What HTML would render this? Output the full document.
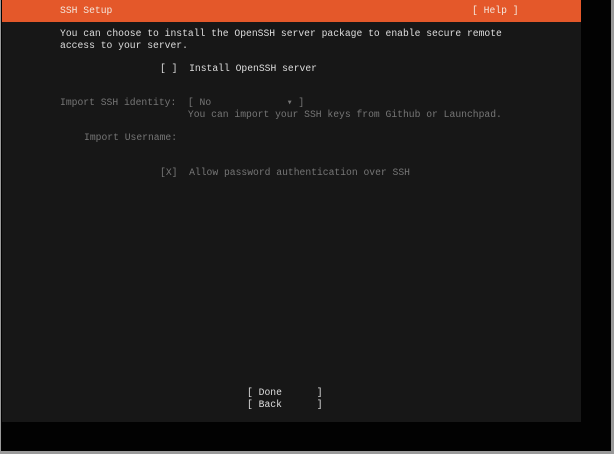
<!DOCTYPE html>
<html><head><style>
html,body{margin:0;padding:0;}
body{width:614px;height:454px;background:#9a9a9a;position:relative;overflow:hidden;font-family:"Liberation Mono",monospace;font-size:9.7px;}
#blk{position:absolute;left:1px;top:0;width:610px;height:451px;background:#020202;}
#scr{position:absolute;left:2px;top:0;width:579px;height:422px;background:#171717;}
#bar{position:absolute;left:2px;top:0;width:579px;height:22px;background:#e4582a;}
.t{position:absolute;white-space:pre;line-height:12px;color:#dedede;}
.d{color:#767676;}
.w{color:#f4e6dc;}
</style></head><body>
<div id="blk"></div><div id="scr"></div><div id="bar"></div>
<div class="t w" style="left:60px;top:5px">SSH Setup</div>
<div class="t w" style="left:472px;top:5px">[ Help ]</div>
<div class="t" style="left:60px;top:28px">You can choose to install the OpenSSH server package to enable secure remote
access to your server.</div>
<div class="t" style="left:160px;top:63px">[ ]  Install OpenSSH server</div>
<div class="t d" style="left:60px;top:97px">Import SSH identity:  [ No             ▾ ]
                      You can import your SSH keys from Github or Launchpad.</div>
<div class="t d" style="left:84px;top:132px">Import Username:</div>
<div class="t d" style="left:160px;top:167px">[X]  Allow password authentication over SSH</div>
<div class="t" style="left:247px;top:387px">[ Done      ]
[ Back      ]</div>
</body></html>
